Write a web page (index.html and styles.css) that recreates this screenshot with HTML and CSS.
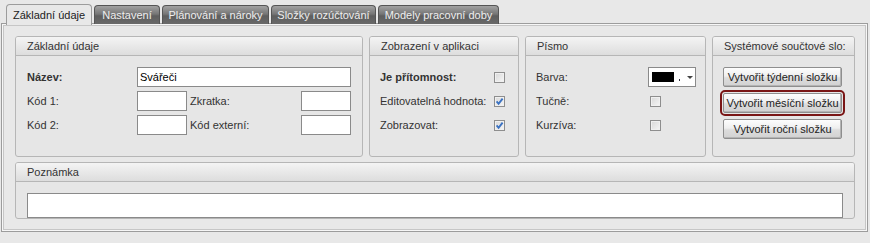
FILE: index.html
```html
<!DOCTYPE html>
<html lang="cs">
<head>
  <meta charset="UTF-8" />
  <title>Složka - Základní údaje</title>
  <link rel="stylesheet" href="styles.css">
</head>
<body>
  <div class="tabs">
    <div class="tab active t1">Základní údaje</div>
    <div class="tab t2">Nastavení</div>
    <div class="tab t3">Plánování a nároky</div>
    <div class="tab t4">Složky rozúčtování</div>
    <div class="tab t5">Modely pracovní doby</div>
  </div>

  <div class="panel">
    <div class="row">
      <div class="group">
        <div class="group-head">Základní údaje</div>
        <div class="group-body zakl">
          <label class="bold">Název:</label>
          <input type="text" class="wide" value="Svářeči" />
          <label>Kód 1:</label>
          <input type="text" />
          <label class="pad">Zkratka:</label>
          <input type="text" />
          <label>Kód 2:</label>
          <input type="text" />
          <label class="pad">Kód externí:</label>
          <input type="text" />
        </div>
      </div>

      <div class="group">
        <div class="group-head">Zobrazení v aplikaci</div>
        <div class="group-body zobr">
          <label class="bold">Je přítomnost:</label>
          <span class="check"></span>
          <label>Editovatelná hodnota:</label>
          <span class="check on"><svg width="11" height="11" viewBox="0 0 11 11"><path d="M2.6 5.4 L4.6 7.8 L8.6 2.6" fill="none" stroke="#3b72c2" stroke-width="1.9"/></svg></span>
          <label>Zobrazovat:</label>
          <span class="check on"><svg width="11" height="11" viewBox="0 0 11 11"><path d="M2.6 5.4 L4.6 7.8 L8.6 2.6" fill="none" stroke="#3b72c2" stroke-width="1.9"/></svg></span>
        </div>
      </div>

      <div class="group">
        <div class="group-head">Písmo</div>
        <div class="group-body pismo">
          <label>Barva:</label>
          <div class="color-select">
            <span class="swatch"></span>
            <span class="dot"></span>
            <span class="arrow"></span>
          </div>
          <label>Tučně:</label>
          <span class="check shift"></span>
          <label>Kurzíva:</label>
          <span class="check shift"></span>
        </div>
      </div>

      <div class="group">
        <div class="group-head">Systémové součtové slo:</div>
        <div class="group-body buttons">
          <button>Vytvořit týdenní složku</button>
          <button class="focused">Vytvořit měsíční složku</button>
          <button>Vytvořit roční složku</button>
        </div>
      </div>
    </div>

    <div class="group note">
      <div class="group-head">Poznámka</div>
      <div class="group-body">
        <textarea></textarea>
      </div>
    </div>
  </div>
</body>
</html>
```

FILE: styles.css
```css
body { margin: 0; background: #e8e8e8; font: 11px "Liberation Sans", Arial, sans-serif; color: #333; }

.tabs { display: flex; align-items: flex-end; height: 24px; padding-left: 6px; gap: 2px; }
.tab { box-sizing: border-box; height: 19px; line-height: 18px; text-align: center; border: 1px solid #555; border-bottom: none; border-radius: 4px 4px 0 0; background: linear-gradient(#a2a2a2, #767676 45%, #5e5e5e 55%, #6a6a6a); color: #eeeeee; white-space: nowrap; overflow: hidden; }
.tab.active { position: relative; z-index: 1; height: 21px; line-height: 20px; margin-bottom: -1px; background: #e8e8e8; border-color: #9c9c9c; color: #222; }
.t1 { width: 86px; }
.t2 { width: 66px; }
.t3 { width: 107px; }
.t4 { width: 105px; }
.t5 { width: 121px; }

.panel { margin: -1px 2px 0 1px; border: 1px solid #9c9c9c; box-shadow: inset 0 0 0 1px #f6f6f6, inset 0 0 0 2px #c6c6c6; padding: 12px 12px 12px 13px; }

.row { display: grid; grid-template-columns: 348px 150px 181px 1fr; column-gap: 6px; height: 121px; }
.note { margin-top: 5px; }

.group { border: 1px solid #b6b6b6; border-radius: 3px; background: #e6e6e6; box-sizing: border-box; overflow: hidden; }
.group-head { height: 18px; line-height: 18px; padding-left: 11px; background: linear-gradient(#f4f4f4, #dddddd); border-bottom: 1px solid #b6b6b6; white-space: nowrap; overflow: hidden; color: #333; }
.group-body { padding: 11px 11px 0 11px; }

label { line-height: 20px; white-space: nowrap; }
.bold { font-weight: bold; }
.pad { padding-left: 3px; }

input, textarea { box-sizing: border-box; border: 1px solid #8a8a8a; background: #fff; font: inherit; color: #000; padding: 0 2px; margin: 0; }
input { height: 20px; width: 100%; }
textarea { display: block; width: 100%; height: 25px; resize: none; }

.zakl { display: grid; grid-template-columns: 110px 50px 1fr 50px; grid-auto-rows: 20px; row-gap: 4px; }
.zakl .wide { grid-column: 2 / 5; }

.zobr { display: grid; grid-template-columns: 1fr 11px; grid-auto-rows: 20px; row-gap: 4px; padding: 11px 13px 0 10px; align-items: center; }
.pismo { display: grid; grid-template-columns: 112px 48px; grid-auto-rows: 20px; row-gap: 4px; padding: 11px 9px 0 10px; align-items: center; }

.check { display: block; box-sizing: border-box; width: 11px; height: 11px; border: 1px solid #8e8e8e; background: linear-gradient(135deg, #d8d8d8, #f6f6f6); box-shadow: inset 0 0 0 1px #f0f0f0; position: relative; }
.check svg { position: absolute; left: -1px; top: -1px; }
.check.shift { margin-left: 2px; }

.color-select { box-sizing: border-box; height: 20px; border: 1px solid #8a8a8a; background: #fff; display: flex; align-items: center; padding-left: 3px; }
.swatch { width: 22px; height: 10px; background: #000; }
.dot { width: 1px; height: 2px; background: #334; margin: 6px 0 0 5px; }
.arrow { width: 0; height: 0; border-left: 3px solid transparent; border-right: 3px solid transparent; border-top: 3px solid #444; margin-left: 7px; }

.buttons { display: flex; flex-direction: column; gap: 6px; padding: 11px 12px 0 10px; }
button { height: 20px; font: inherit; color: #222; border: 1px solid #8e8e8e; border-radius: 2px; background: linear-gradient(#fdfdfd, #efefef 45%, #dcdcdc 55%, #d2d2d2); box-shadow: inset -1px -1px 0 #b4b4b4; padding: 0; white-space: nowrap; }
button.focused { outline: 2px solid #7a1616; outline-offset: 1px; }
```
